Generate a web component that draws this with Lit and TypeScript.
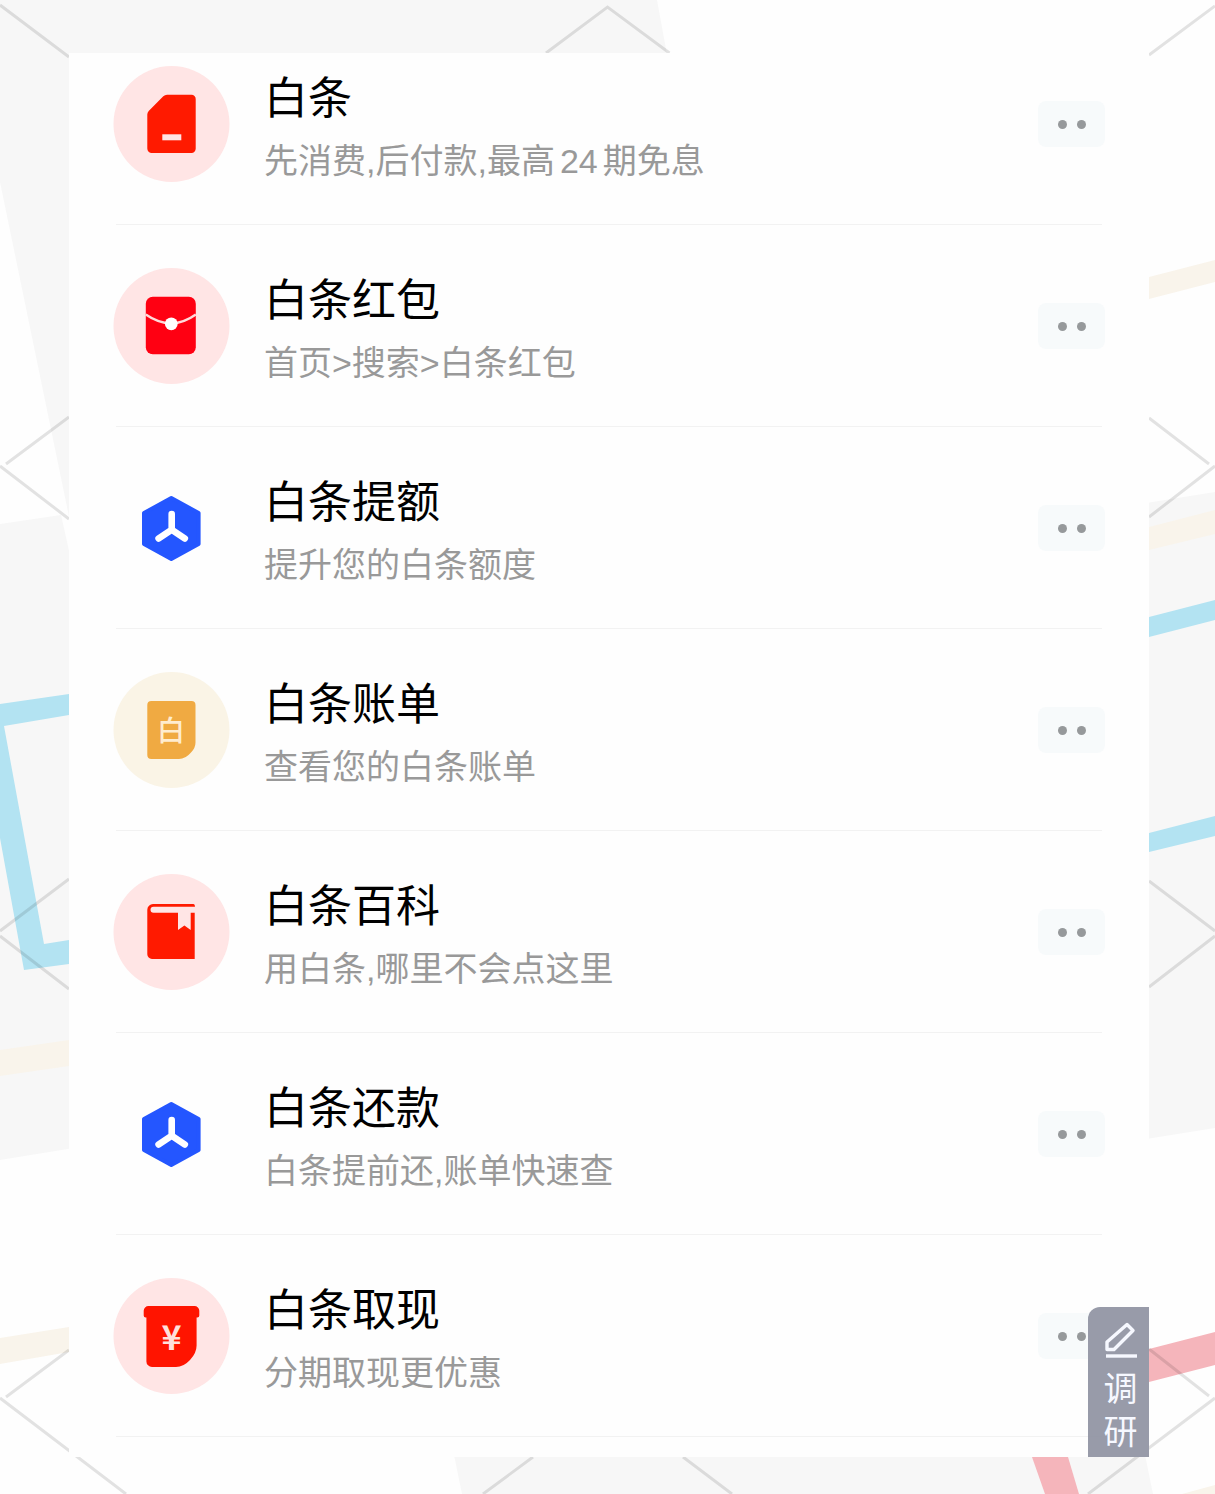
import { LitElement, html, svg, css } from "lit";
import { customElement, property } from "lit/decorators.js";

type IconName = "card" | "envelope" | "hexagon" | "bill" | "book" | "cash";

interface Service {
  icon: IconName;
  title: string;
  note: string;
}

const SERVICES: Service[] = [
  { icon: "card", title: "白条", note: "先消费,后付款,最高24期免息" },
  { icon: "envelope", title: "白条红包", note: "首页>搜索>白条红包" },
  { icon: "hexagon", title: "白条提额", note: "提升您的白条额度" },
  { icon: "bill", title: "白条账单", note: "查看您的白条账单" },
  { icon: "book", title: "白条百科", note: "用白条,哪里不会点这里" },
  { icon: "hexagon", title: "白条还款", note: "白条提前还,账单快速查" },
  { icon: "cash", title: "白条取现", note: "分期取现更优惠" },
];

const pinkDisc = svg`<circle cx="58.5" cy="59" r="58" fill="#ffe5e5"/>`;

const ICONS = {
  card: svg`${pinkDisc}
    <path fill="#ff1a00" d="M54 29.7H78.5a4.2 4.2 0 0 1 4.2 4.2V83.8a4.2 4.2 0 0 1-4.2 4.2H38.7a4.4 4.4 0 0 1-4.4-4.4V49.5q0-2 1.4-3.5L50.3 31.3q1.6-1.6 3.7-1.6z"/>
    <rect x="49.3" y="69.3" width="19" height="6" fill="#ffe5e5"/>`,
  envelope: svg`${pinkDisc}
    <rect x="32.8" y="29.7" width="50" height="57.6" rx="7" fill="#ff0012"/>
    <path d="M32.8 47.5Q45 56 58.2 56.5Q71 56 82.8 47.5" fill="none" stroke="#ffdada" stroke-width="2.4"/>
    <circle cx="58.3" cy="56.8" r="6.4" fill="#fff"/>`,
  hexagon: svg`
    <path fill="#2456ff" stroke="#2456ff" stroke-width="4" stroke-linejoin="round" d="M58.3 29L85.6 44V75L58.3 90L31 75V44z"/>
    <path fill="none" stroke="#fff" stroke-width="6.6" stroke-linecap="round" d="M58.7 45V60.5M45.6 69.4L58.7 60.8L71.8 69.4"/>`,
  bill: svg`<circle cx="58.5" cy="59" r="58" fill="#faf4e6"/>
    <path fill="#f0aa42" d="M38.3 30H78.5a4 4 0 0 1 4 4V71.5Q82.5 77 78 81.5Q72.5 88 66 88H38.3a4 4 0 0 1-4-4V34a4 4 0 0 1 4-4z"/>
    <text class="bill-mark" x="58" y="70" text-anchor="middle">白</text>`,
  book: svg`${pinkDisc}
    <path fill="#ff1a00" d="M40 31H80.5Q82 31 82 33.7H40.5a3 3 0 0 0 0 6H65V57L71.4 52.5L77.7 57V39.7H81.7V86H39a4.7 4.7 0 0 1-4.7-4.7V36.7A5.7 5.7 0 0 1 40 31z"/>`,
  cash: svg`${pinkDisc}
    <path fill="#ff1400" d="M35.5 29H81.5a4.8 4.8 0 0 1 4.8 4.8V38.5a2 2 0 0 1-2 2H83.6V68.5Q83.6 76 77 83Q70.5 90 63 90H39a5.6 5.6 0 0 1-5.6-5.6V40.5H32.7a2 2 0 0 1-2-2V33.8A4.8 4.8 0 0 1 35.5 29z"/>
    <text class="cash-mark" x="58.5" y="73" text-anchor="middle">¥</text>`,
};

@customElement("geo-backdrop")
export class GeoBackdrop extends LitElement {
  static styles = css`
    :host {
      display: block;
    }
    .art {
      display: block;
      width: 100%;
      height: 100%;
    }
  `;

  render() {
    return html`
      <svg class="art" viewBox="0 0 1215 1494" preserveAspectRatio="none" aria-hidden="true">
        <g fill="#f7f7f7">
          <path d="M0 0H657L668 60H80V570L0 182z" />
          <path d="M0 524L61 515L80 600V1147L0 1160z" />
          <path d="M1140 504L1215 492V1128L1140 1140z" />
          <path d="M453 1450L462 1494H1153L1144 1450z" />
        </g>
        <g fill="#f9f4eb">
          <path d="M1149 277L1215 260V282L1149 299z" />
          <path d="M1149 527L1215 510V534L1149 550z" />
          <path d="M0 1050L69 1040V1066L0 1076z" />
          <path d="M0 1338L69 1327V1352L0 1364z" />
          <path d="M1182 1494L1215 1485V1494z" />
        </g>
        <g fill="#b3e3f2">
          <path d="M0 704L69 694V715L4 726L44 944L69 940V964L24 970L0 838z" />
          <path d="M1149 617L1215 600V620L1149 637z" />
          <path d="M1149 833L1215 816V836L1149 852z" />
        </g>
        <g fill="#f5b5bb">
          <path d="M1149 1349L1215 1332V1365L1149 1382z" />
          <path d="M1032 1457H1068L1079 1494H1045z" />
        </g>
        <g fill="none" stroke="#000" stroke-opacity=".11" stroke-width="3">
          <path d="M0 5L69 57M546 53L607.5 7L669.5 53M1149 55L1215 6" />
          <path d="M6 464L69 417M0 466L69 519M1149 418L1209 464M1149 517L1215 466" />
          <path d="M0 931L69 879M0 936L69 989M1149 881L1215 931M1149 987L1215 936" />
          <path d="M6 1397L69 1350M0 1398L126 1494M533 1457L483 1494M683 1457L732 1494" />
          <path d="M1149 1349L1209 1396M1215 1398L1088 1494" />
        </g>
      </svg>
    `;
  }
}

@customElement("service-row")
export class ServiceRow extends LitElement {
  @property({ attribute: false }) service!: Service;

  static styles = css`
    :host {
      display: flex;
      align-items: center;
      justify-content: space-between;
    }
    .link {
      display: flex;
      flex: 1;
      align-items: center;
      gap: 33px;
      min-width: 0;
      color: #000;
      text-decoration: none;
    }
    .icon {
      flex: none;
      width: 118px;
      height: 118px;
    }
    .bill-mark,
    .cash-mark {
      font-family: "Noto Sans CJK SC", sans-serif;
      fill: #ffeccf;
    }
    .bill-mark {
      font-size: 28px;
      font-weight: 500;
    }
    .cash-mark {
      font-size: 34px;
      font-weight: 700;
      fill: #ffe0dc;
    }
    .words {
      display: flex;
      flex-direction: column;
      gap: 12px;
      padding-top: 6px;
    }
    .title {
      font-size: 44px;
      line-height: 56px;
    }
    .note {
      font-size: 34px;
      line-height: 44px;
      color: #999;
    }
    .number {
      margin: 0 5px;
    }
    .more {
      display: flex;
      flex: none;
      align-items: center;
      justify-content: center;
      gap: 10px;
      width: 67px;
      height: 46px;
      padding: 0;
      border: 0;
      border-radius: 8px;
      background: #f7fafb;
    }
    .dot {
      width: 9px;
      height: 9px;
      border-radius: 50%;
      background: #96999b;
    }
  `;

  render() {
    const { icon, title, note } = this.service;
    const noteParts = note
      .split(/(\d+)/)
      .map((part) => (/^\d+$/.test(part) ? html`<span class="number">${part}</span>` : part));
    return html`
      <a class="link" href="#">
        <svg class="icon" viewBox="0 0 118 118" aria-hidden="true">${ICONS[icon]}</svg>
        <span class="words">
          <span class="title">${title}</span>
          <span class="note">${noteParts}</span>
        </span>
      </a>
      <button class="more" type="button" aria-label="更多">
        <span class="dot"></span><span class="dot"></span>
      </button>
    `;
  }
}

@customElement("app-root")
export class AppRoot extends LitElement {
  static styles = css`
    :host {
      display: block;
      position: relative;
      box-sizing: border-box;
      min-height: 100vh;
      padding: 53px 66px 37px 69px;
      background: #fefefe;
      font-family: "Liberation Sans", "Noto Sans CJK SC", sans-serif;
    }
    .backdrop {
      position: absolute;
      inset: 0;
    }
    .panel {
      position: relative;
      padding: 0 44px 20px;
      background: #fefefe;
    }
    .list {
      margin: 0;
      padding: 0;
      list-style: none;
    }
    .row {
      padding: 42px 0 41px;
    }
    .item:first-child .row {
      padding-top: 12px;
    }
    .rule {
      height: 1px;
      margin: 0 3px;
      background: #f2f2f2;
    }
    .survey {
      position: absolute;
      right: 0;
      bottom: 0;
      display: flex;
      flex-direction: column;
      align-items: center;
      gap: 6px;
      width: 61px;
      padding: 14px 0 6px 4px;
      border: 0;
      border-radius: 12px 0 0 0;
      background: rgba(143, 146, 162, 0.92);
      color: #f6f8ff;
      font-family: "Noto Sans CJK SC", sans-serif;
      font-size: 34px;
      line-height: 43px;
    }
    .pen {
      width: 36px;
      height: 38px;
    }
    .label {
      width: 34px;
    }
  `;

  render() {
    return html`
      <geo-backdrop class="backdrop"></geo-backdrop>
      <main class="panel">
        <ul class="list">
          ${SERVICES.map(
            (service) => html`
              <li class="item">
                <service-row class="row" .service=${service}></service-row>
                <div class="rule"></div>
              </li>
            `
          )}
        </ul>
        <button class="survey" type="button">
          <svg class="pen" viewBox="0 0 36 38" aria-hidden="true">
            <g fill="none" stroke="#f6f8ff" stroke-width="3.4">
              <path stroke-linejoin="round" d="M4 28.5V21L24 3.5L30 9.5L11 28.5z" />
              <path d="M3 35H34" />
            </g>
          </svg>
          <span class="label">调研</span>
        </button>
      </main>
    `;
  }
}
